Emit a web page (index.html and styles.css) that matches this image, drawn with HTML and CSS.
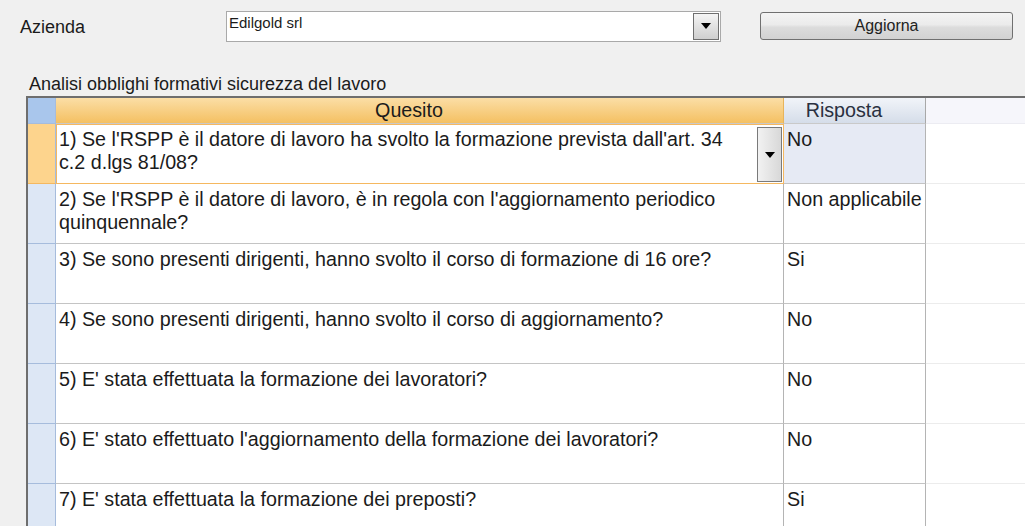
FILE: index.html
```html
<!DOCTYPE html>
<html lang="it">
<head>
  <meta charset="UTF-8">
  <title>Analisi obblighi formativi</title>
  <link rel="stylesheet" href="styles.css">
</head>
<body>
  <div class="toolbar">
    <label class="field-label">Azienda</label>
    <div class="combo">
      <span class="combo-text">Edilgold srl</span>
      <span class="combo-btn"><span class="arrow"></span></span>
    </div>
    <button class="btn">Aggiorna</button>
  </div>

  <div class="caption">Analisi obblighi formativi sicurezza del lavoro</div>

  <div class="grid">
    <div class="cell sel head-sel"></div>
    <div class="cell head head-q">Quesito</div>
    <div class="cell head head-r">Risposta</div>
    <div class="cell head-rest"></div>

    <div class="cell sel sel-active"></div>
    <div class="cell q q-edit">
      <span class="edit-text">1) Se l'RSPP è il datore di lavoro ha svolto la formazione prevista dall'art. 34 c.2 d.lgs 81/08?</span>
      <span class="cell-btn"><span class="arrow"></span></span>
    </div>
    <div class="cell r r-active">No</div>
    <div class="cell rest"></div>

    <div class="cell sel"></div>
    <div class="cell q">2) Se l'RSPP è il datore di lavoro, è in regola con l'aggiornamento periodico quinquennale?</div>
    <div class="cell r">Non applicabile</div>
    <div class="cell rest"></div>

    <div class="cell sel"></div>
    <div class="cell q">3) Se sono presenti dirigenti, hanno svolto il corso di formazione di 16 ore?</div>
    <div class="cell r">Si</div>
    <div class="cell rest"></div>

    <div class="cell sel"></div>
    <div class="cell q">4) Se sono presenti dirigenti, hanno svolto il corso di aggiornamento?</div>
    <div class="cell r">No</div>
    <div class="cell rest"></div>

    <div class="cell sel"></div>
    <div class="cell q">5) E' stata effettuata la formazione dei lavoratori?</div>
    <div class="cell r">No</div>
    <div class="cell rest"></div>

    <div class="cell sel"></div>
    <div class="cell q">6) E' stato effettuato l'aggiornamento della formazione dei lavoratori?</div>
    <div class="cell r">No</div>
    <div class="cell rest"></div>

    <div class="cell sel"></div>
    <div class="cell q">7) E' stata effettuata la formazione dei preposti?</div>
    <div class="cell r">Si</div>
    <div class="cell rest"></div>
  </div>
</body>
</html>
```

FILE: styles.css
```css
/* Base */
body {
  margin: 0;
  background: #f0f0f0;
  font-family: "Liberation Sans", Arial, sans-serif;
  color: #1b1b1b;
  overflow: hidden;
}

/* Top bar */
.toolbar {
  display: flex;
  align-items: center;
  padding: 10px 0 0 20px;
  height: 32px;
}
.field-label {
  width: 206px;
  font-size: 18px;
  padding-top: 2px;
}
.combo {
  width: 495px;
  height: 31px;
  box-sizing: border-box;
  background: #fff;
  border: 1px solid #a9a9a9;
  display: flex;
  justify-content: space-between;
}
.combo-text {
  font-size: 15px;
  padding: 2px 0 0 2px;
}
.combo-btn {
  width: 26px;
  box-sizing: border-box;
  border: 1px solid #6f6f6f;
  margin: 1px 1px 1px 0;
  background: linear-gradient(#f4f4f4, #cfcfcf);
  display: flex;
  align-items: center;
  justify-content: center;
}
.arrow {
  width: 0;
  height: 0;
  border-left: 5px solid transparent;
  border-right: 5px solid transparent;
  border-top: 6px solid #000;
}
.btn {
  margin-left: 39px;
  width: 253px;
  height: 28px;
  border: 1px solid #707070;
  border-radius: 3px;
  background: linear-gradient(#f4f4f4 0%, #ebebeb 45%, #dcdcdc 55%, #d2d2d2 100%);
  font-family: inherit;
  font-size: 16px;
  color: #222;
  padding: 0;
}

/* Caption */
.caption {
  font-size: 18px;
  margin: 32px 0 0 29px;
  line-height: 20px;
}

/* Grid */
.grid {
  margin: 2px 0 0 26px;
  border-top: 2px solid #6e6e6e;
  border-left: 2px solid #6e6e6e;
  display: grid;
  grid-template-columns: 28px 728px 142px 1fr;
  grid-template-rows: 26px;
  grid-auto-rows: 60px;
  background: #fff;
}
.cell {
  box-sizing: border-box;
  font-size: 19.7px;
  line-height: 23px;
}
.sel {
  background: #dde7f5;
  border-right: 1px solid #a6bcdc;
  border-bottom: 1px solid #a6bcdc;
}
.head-sel {
  background: #a9c6ec;
}
.sel-active {
  background: #fdd48d;
  border-bottom-color: #f4b860;
}
.head {
  text-align: center;
  line-height: 25px;
  padding-right: 21px;
  border-bottom: 1px solid #c9c9c9;
}
.head-q {
  background: linear-gradient(#fbdea6, #f4c062);
  border-right: 1px solid #e8b45a;
}
.head-r {
  background: linear-gradient(#f1f4f9, #d5dde9);
  border-right: 1px solid #a8a8a8;
  color: #2a3040;
}
.head-rest {
  background: #f6f6fb;
  border-bottom: 1px solid #ececf2;
}
.q, .r {
  padding: 4px 0 0 3px;
  border-right: 1px solid #b4b4b4;
  border-bottom: 1px solid #c4c4c4;
}
.rest {
  border-bottom: 1px solid #ececec;
}
.q-edit {
  display: flex;
  justify-content: space-between;
  border: 1px solid #f5b860;
  padding: 3px 1px 1px 2px;
}
.edit-text {
  padding-right: 12px;
}
.cell-btn {
  flex: none;
  width: 25px;
  box-sizing: border-box;
  margin-top: -1px;
  border: 1px solid #7a7a7a;
  background: linear-gradient(90deg, #f2f2f2, #d8d8d8);
  display: flex;
  align-items: center;
  justify-content: center;
}
.r-active {
  background: #e6eaf4;
}
```
